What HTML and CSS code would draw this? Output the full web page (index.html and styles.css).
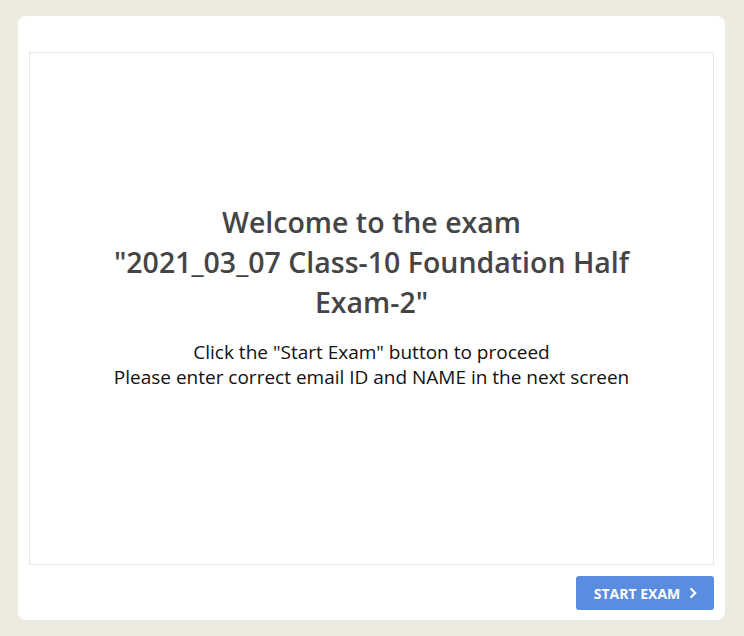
FILE: index.html
```html
<!DOCTYPE html>
<html>
<head>
<meta charset="utf-8">
<link rel="stylesheet" href="styles.css">
</head>
<body>
<div class="card">
  <div class="panel">
    <div class="intro">
      <h1 class="title">Welcome to the exam<br>"2021_03_07 Class-10 Foundation Half <span class="nowrap">Exam-2"</span></h1>
      <p class="note">Click the "Start Exam" button to proceed<br>Please enter correct email ID and NAME in the next screen</p>
    </div>
  </div>
  <div class="actions">
    <button class="start">START EXAM<svg class="chev" width="8" height="12" viewBox="0 0 8 12"><path d="M1.5 1.2 L6.2 6 L1.5 10.8" fill="none" stroke="#fff" stroke-width="2.2"/></svg></button>
  </div>
</div>
</body>
</html>
```
FILE: styles.css
```css
html, body { margin: 0; padding: 0; }
body {
  background: #edeadf;
  font-family: "Open Sans", sans-serif;
  width: 744px;
  height: 636px;
  overflow: hidden;
}
.card {
  margin: 16px 0 0 18px;
  width: 707px;
  height: 604px;
  box-sizing: border-box;
  background: #fff;
  border-radius: 8px;
  padding: 36px 11px 10px 11px;
  display: flex;
  flex-direction: column;
}
.panel {
  height: 513px;
  box-sizing: border-box;
  border: 1px solid #e6e6e6;
  display: flex;
  align-items: center;
  justify-content: center;
}
.intro {
  width: 600px;
  text-align: center;
  margin-top: -26px;
}
.title {
  margin: 0;
  font-size: 28.5px;
  line-height: 40px;
  font-weight: 600;
  color: #454545;
}
.nowrap { white-space: nowrap; }
.note {
  margin: 18px 0 0 0;
  font-size: 19px;
  line-height: 25px;
  color: #111;
}
.actions {
  display: flex;
  justify-content: flex-end;
  margin-top: 11px;
}
.start {
  width: 138px;
  height: 34px;
  border: none;
  border-radius: 3px;
  background: #5a8de0;
  color: #fff;
  font-family: "Open Sans", sans-serif;
  font-weight: 700;
  font-size: 14px;
  display: flex;
  align-items: center;
  justify-content: center;
  gap: 9px;
  padding: 0 0 0 1px;
}
```
